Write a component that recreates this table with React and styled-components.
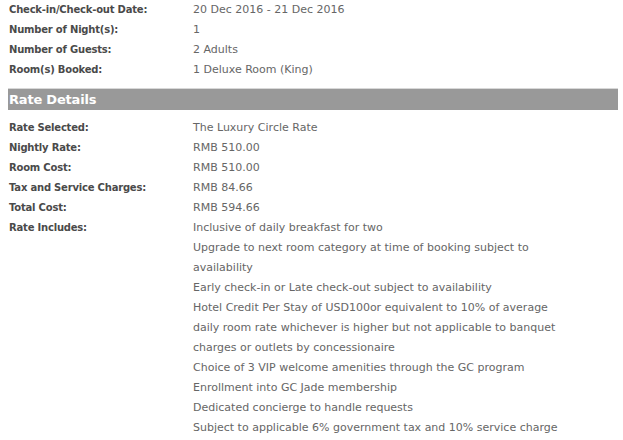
import React from "react";
import styled, { createGlobalStyle } from "styled-components";

const GlobalStyle = createGlobalStyle`
  body {
    margin: 0;
    background: #fff;
    font-family: "DejaVu Sans", Verdana, sans-serif;
  }
`;

const summary = [
  ["Check-in/Check-out Date:", "20 Dec 2016 - 21 Dec 2016"],
  ["Number of Night(s):", "1"],
  ["Number of Guests:", "2 Adults"],
  ["Room(s) Booked:", "1 Deluxe Room (King)"],
];

const rates = [
  ["Rate Selected:", "The Luxury Circle Rate"],
  ["Nightly Rate:", "RMB 510.00"],
  ["Room Cost:", "RMB 510.00"],
  ["Tax and Service Charges:", "RMB 84.66"],
  ["Total Cost:", "RMB 594.66"],
];

const includes = [
  "Inclusive of daily breakfast for two",
  "Upgrade to next room category at time of booking subject to availability",
  "Early check-in or Late check-out subject to availability",
  "Hotel Credit Per Stay of USD100or equivalent to 10% of average daily room rate whichever is higher but not applicable to banquet charges or outlets by concessionaire",
  "Choice of 3 VIP welcome amenities through the GC program",
  "Enrollment into GC Jade membership",
  "Dedicated concierge to handle requests",
  "Subject to applicable 6% government tax and 10% service charge",
];

const Page = styled.div`
  width: 610px;
  padding: 0 5px 0 8px;
`;

const Row = styled.div`
  display: grid;
  grid-template-columns: 185px 375px;
  line-height: 20px;
`;

const Label = styled.div`
  font-family: "DejaVu Sans", Tahoma, sans-serif;
  font-size: 10px;
  letter-spacing: -0.2px;
  font-weight: bold;
  color: #4a4a4a;
  padding-left: 1px;
`;

const Value = styled.div`
  font-size: 11px;
  color: #666;
`;

const List = styled.ul`
  list-style: none;
  margin: 0;
  padding: 0;
`;

const Item = styled.li`
  line-height: 20px;
`;

const SectionBar = styled.div`
  margin: 8px 0;
  height: 21px;
  background: #999;
  border-top: 1px solid #d8d8d8;
  color: #fff;
  font-family: "DejaVu Sans", Tahoma, sans-serif;
  font-weight: bold;
  font-size: 13px;
  letter-spacing: -0.2px;
  line-height: 21px;
  padding-left: 1px;
`;

const App = () => {
  return (
    <Page>
      <GlobalStyle />
      {summary.map(([label, value]) => (
        <Row key={label}>
          <Label>{label}</Label>
          <Value>{value}</Value>
        </Row>
      ))}
      <SectionBar>Rate Details</SectionBar>
      {rates.map(([label, value]) => (
        <Row key={label}>
          <Label>{label}</Label>
          <Value>{value}</Value>
        </Row>
      ))}
      <Row>
        <Label>Rate Includes:</Label>
        <Value>
          <List>
            {includes.map((item) => (
              <Item key={item}>{item}</Item>
            ))}
          </List>
        </Value>
      </Row>
    </Page>
  );
};

export default App;
